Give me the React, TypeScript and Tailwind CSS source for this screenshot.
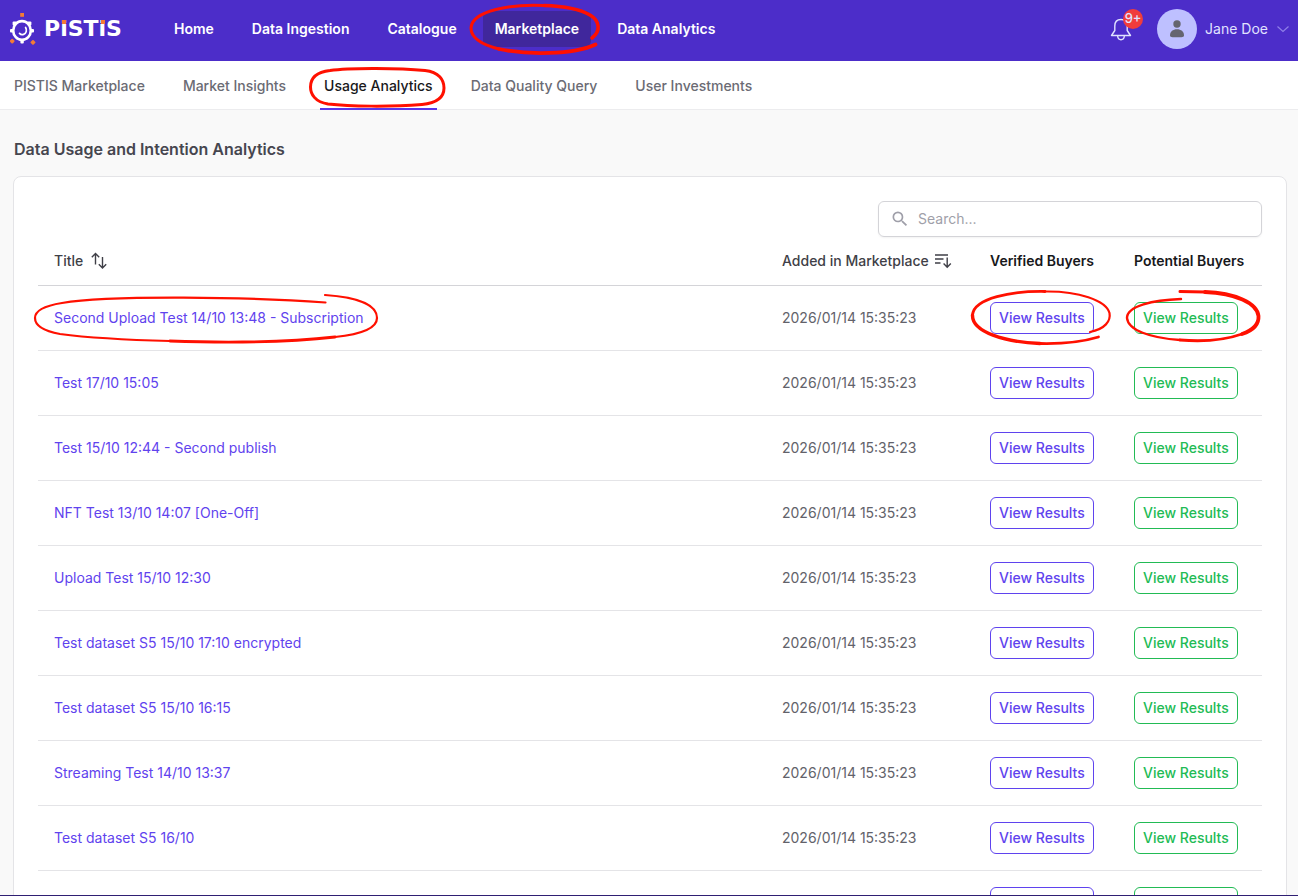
import React from 'react'
import { MdSearch } from 'react-icons/md'

interface Dataset {
  title: string
  added: string
}

const ADDED = '2026/01/14 15:35:23'

const datasets: Dataset[] = [
  { title: 'Second Upload Test 14/10 13:48 - Subscription', added: ADDED },
  { title: 'Test 17/10 15:05', added: ADDED },
  { title: 'Test 15/10 12:44 - Second publish', added: ADDED },
  { title: 'NFT Test 13/10 14:07 [One-Off]', added: ADDED },
  { title: 'Upload Test 15/10 12:30', added: ADDED },
  { title: 'Test dataset S5 15/10 17:10 encrypted', added: ADDED },
  { title: 'Test dataset S5 15/10 16:15', added: ADDED },
  { title: 'Streaming Test 14/10 13:37', added: ADDED },
  { title: 'Test dataset S5 16/10', added: ADDED },
  { title: 'Test dataset S5 15/10', added: ADDED },
]

const mainNav = ['Home', 'Data Ingestion', 'Catalogue', 'Marketplace', 'Data Analytics']

const subNav = [
  'PISTIS Marketplace',
  'Market Insights',
  'Usage Analytics',
  'Data Quality Query',
  'User Investments',
]

// Hand-drawn red marker ring, laid over its relative parent
function Marker({
  className,
  viewBox,
  strokes,
}: {
  className: string
  viewBox: string
  strokes: { d: string; w: number }[]
}) {
  return (
    <svg
      className={`pointer-events-none absolute z-10 max-w-none ${className}`}
      viewBox={viewBox}
      fill="none"
      stroke="#ff1000"
      strokeLinecap="round"
      aria-hidden="true"
    >
      {strokes.map((s) => (
        <path key={s.d} d={s.d} strokeWidth={s.w} />
      ))}
    </svg>
  )
}

function LogoMark() {
  return (
    <svg className="h-8 w-[26px]" viewBox="0 0 26 32" fill="none" aria-hidden="true">
      <ellipse cx="12" cy="17.5" rx="8.8" ry="9.4" stroke="#fff" strokeWidth="2.6" />
      <g fill="#fff">
        <rect x="0" y="16" width="4" height="3.4" rx="1" />
        <rect x="20" y="16" width="4" height="3.4" rx="1" />
        <rect x="10.4" y="26" width="3.4" height="4.4" rx="1" />
        <rect x="2.6" y="8.6" width="4" height="4" rx="1" />
        <rect x="17.4" y="8.6" width="4" height="4" rx="1" />
      </g>
      <path d="M15.6 14.5c1.6 2.6.8 5.9-2 6.9-1.5.5-3.1.1-4.1-1" stroke="#fff" strokeWidth="1.7" strokeLinecap="round" />
      <g fill="#f47b35">
        <rect x="10.2" y="0" width="3.8" height="3.8" />
        <rect x="0.2" y="26.1" width="4" height="4" rx="1" transform="rotate(45 2.2 28.1)" />
        <rect x="21" y="27.4" width="4" height="4" rx="1" transform="rotate(45 23 29.4)" />
      </g>
    </svg>
  )
}

function DottedI() {
  return (
    <span className="relative">
      i
      <span className="absolute top-[4px] left-[2px] h-[4px] w-[4px] bg-[#f47b35]" />
    </span>
  )
}

function SortBoth() {
  return (
    <svg className="h-5 w-5" viewBox="0 0 20 20" fill="none" stroke="currentColor" strokeWidth="1.4" aria-hidden="true">
      <path d="M6.5 13.5V2.5M2.8 6.2 6.5 2.5l3.7 3.7M13.5 6v11M9.8 13.3l3.7 3.7 3.7-3.7" />
    </svg>
  )
}

function SortDesc() {
  return (
    <svg className="h-5 w-5" viewBox="0 0 20 20" fill="none" stroke="currentColor" strokeWidth="1.4" aria-hidden="true">
      <path d="M2 4h13M2 8h8.5M2 12h5.5M14.2 6.5V16M10.6 12.6l3.6 3.6 3.6-3.6" />
    </svg>
  )
}

function BellIcon() {
  return (
    <svg className="h-6 w-6" viewBox="0 0 24 24" fill="none" stroke="currentColor" strokeWidth="1.4" strokeLinejoin="round" aria-hidden="true">
      <path d="M12 2.5c-4 0-6.2 2.8-6.2 6.5v4.5L2.5 18.5h19l-3.3-5V9c0-3.7-2.2-6.5-6.2-6.5ZM8.6 18.8c.2 2.5 1.5 3.9 3.4 3.9s3.2-1.4 3.4-3.9" />
    </svg>
  )
}

function Header() {
  return (
    <header className="flex shrink-0 items-center bg-[#4c2dc9] pt-[9px] pr-2 pb-3 pl-2.5">
      <a href="#" className="flex w-[152px] shrink-0 items-center gap-2">
        <LogoMark />
        <span className="font-['DejaVu_Sans'] text-[22px] leading-6 font-bold text-white">
          P<DottedI />ST<DottedI />S
        </span>
      </a>
      <nav className="flex flex-1 gap-3.5">
        {mainNav.map((item) => (
          <a
            key={item}
            href="#"
            className={`relative rounded-md px-3 py-2 text-sm font-semibold whitespace-nowrap text-white ${
              item === 'Marketplace' ? 'bg-[#40279c]' : ''
            }`}
          >
            {item}
            {item === 'Marketplace' && (
              <Marker
                className="-top-2 -left-4 h-14 w-[136px]"
                viewBox="468 3 136 56"
                strokes={[
                  { d: 'M593 38C602 31 601 21 591 15C579 8 562 6 545 5.5', w: 3.6 },
                  { d: 'M545 5.5C513 4 473 10 472 28C472 38 484 45 500 49', w: 3 },
                  { d: 'M500 49C528 55 574 55 596.5 44.5', w: 3.8 },
                ]}
              />
            )}
          </a>
        ))}
      </nav>
      <div className="flex items-center gap-4">
        <button aria-label="Notifications" className="relative flex h-10 w-10 items-center justify-center text-[#e0e2ff]">
          <BellIcon />
          <span className="absolute top-0 -right-0.5 flex h-5 w-5 items-center justify-center rounded-full bg-[#f03c3c] text-[13px] font-medium">
            9+
          </span>
        </button>
        <button className="flex items-center gap-2 text-sm text-[#e0e2ff]">
          <span className="flex h-10 w-10 items-center justify-center rounded-full bg-[#bec0ff]">
            <svg className="h-5 w-5 text-[#65656f]" viewBox="0 0 20 20" fill="currentColor" aria-hidden="true">
              <circle cx="10" cy="5" r="3.7" />
              <path d="M3 16.5c0-4 3-6.2 7-6.2s7 2.2 7 6.2c0 1.2-1.2 1.7-2.5 1.7h-9C4.2 18.2 3 17.7 3 16.5Z" />
            </svg>
          </span>
          Jane Doe
          <svg className="h-3.5 w-3.5 text-[#8f7fe8]" viewBox="1 1 14 14" fill="none" stroke="currentColor" strokeWidth="1.2" aria-hidden="true">
            <path d="m2.5 5.5 5.5 5 5.5-5" />
          </svg>
        </button>
      </div>
    </header>
  )
}

function SubNav() {
  return (
    <nav className="flex shrink-0 gap-[30px] border-b border-[#ececee] bg-white px-2.5">
      {subNav.map((item) => {
        const active = item === 'Usage Analytics'
        return (
          <a
            key={item}
            href="#"
            className={`relative -mb-px border-b-2 px-1 pt-[15px] pb-3 text-sm font-medium whitespace-nowrap ${
              active ? 'border-[#5a36e8] text-zinc-900' : 'border-transparent text-[#6b6b74]'
            }`}
          >
            {item}
            {active && (
              <Marker
                className="top-1 -left-4 h-11 w-[144px]"
                viewBox="304 65 144 44"
                strokes={[
                  {
                    d: 'M330 70.5C350 67.5 400 68 425 70.5C439 72 444 80 444 88C444 97 437 103 422 104.5C390 107 350 106.5 328 104C315 102 310.5 94 310.5 87C310.5 78 317 72 330 70.5Z',
                    w: 3,
                  },
                ]}
              />
            )}
          </a>
        )
      })}
    </nav>
  )
}

const resultsButton = 'relative h-8 rounded-md border px-2 text-sm font-medium whitespace-nowrap'

function DatasetRow({ dataset, marked }: { dataset: Dataset; marked: boolean }) {
  return (
    <tr className="h-[65px] border-b border-zinc-200">
      <td className="px-4">
        <a href="#" className="relative inline-block text-[#5f43ee]">
          {dataset.title}
          {marked && (
            <Marker
              className="-top-4 -left-6 h-[56px] w-[352px]"
              viewBox="30 292 352 56"
              strokes={[
                {
                  d: 'M325.5 302.5C250 297 110 295 62 303C43 306 35 311 35 318C35 326 44 331 60 334C90 338 130 340 170 341',
                  w: 2.2,
                },
                { d: 'M170 341C230 343 290 342 335 337', w: 2.8 },
                { d: 'M335 337C364 334 377 327 377 318C377 304 355 297 325 295', w: 2.2 },
              ]}
            />
          )}
        </a>
      </td>
      <td className="px-4 text-[#62626a]">{dataset.added}</td>
      <td className="px-4">
        <button className={`${resultsButton} border-[#5f43ee] text-[#5f43ee]`}>
          View Results
          {marked && (
            <Marker
              className="-top-[15px] -left-[23px] h-[60px] w-[148px]"
              viewBox="968 288 148 60"
              strokes={[
                { d: 'M1090 332C1105 329 1111 321 1109.5 313C1106 300 1078 291 1045 291.5', w: 2.2 },
                { d: 'M1045 291.5C1012 291 974 298 972.5 315', w: 2.8 },
                { d: 'M972.5 315C972 332 1005 342 1040 343.5', w: 3.4 },
                { d: 'M1040 343.5C1062 344 1082 342 1098.5 337', w: 2.8 },
              ]}
            />
          )}
        </button>
      </td>
      <td className="px-4">
        <button className={`${resultsButton} border-[#22bb55] text-[#22bb55]`}>
          View Results
          {marked && (
            <Marker
              className="-top-[15px] -left-[15px] h-[60px] w-[144px]"
              viewBox="1120 288 144 60"
              strokes={[
                { d: 'M1181 299C1153 300 1127 306 1127 318C1128 330 1150 338 1180 340', w: 2.4 },
                { d: 'M1180 340C1205 342 1228 339 1242 334', w: 2.8 },
                { d: 'M1242 334C1254 330 1259 324 1258.5 316C1257 303 1235 293 1205 292', w: 3.8 },
                { d: 'M1205 292L1180 291.5', w: 3 },
              ]}
            />
          )}
        </button>
      </td>
    </tr>
  )
}

export default function App() {
  return (
    <div className="flex h-screen flex-col border-b border-[#2f1f73] bg-[#f9f9f9] font-['Inter',sans-serif]">
      <Header />
      <SubNav />
      <main className="min-h-0 flex-1 overflow-x-hidden overflow-y-auto pr-[11px] pl-[13px] [scrollbar-width:none]">
        <h1 className="px-px pt-[27px] pb-[15px] text-base font-semibold text-[#46464f]">
          Data Usage and Intention Analytics
        </h1>
        <section className="rounded-lg border border-zinc-200 bg-white p-6">
          <label className="ml-auto flex h-9 w-96 items-center gap-2 rounded-md border border-zinc-300 px-[11px] shadow-xs">
            <MdSearch className="h-5 w-5 text-zinc-400" aria-hidden="true" />
            <input
              type="text"
              aria-label="Search"
              placeholder="Search..."
              className="min-w-0 flex-1 text-sm text-zinc-900 outline-none placeholder:text-zinc-400"
            />
          </label>
          <table className="w-full table-fixed text-left text-sm">
            <thead>
              <tr className="h-12 border-b border-zinc-300">
                <th className="px-4 font-medium text-zinc-700">
                  <button className="flex items-center gap-1.5">
                    Title
                    <SortBoth />
                  </button>
                </th>
                <th className="w-52 px-4 font-medium text-zinc-700">
                  <button className="flex items-center gap-1 whitespace-nowrap">
                    Added in Marketplace
                    <SortDesc />
                  </button>
                </th>
                <th className="w-36 px-4 font-semibold whitespace-nowrap text-zinc-900">Verified Buyers</th>
                <th className="w-36 px-4 font-semibold whitespace-nowrap text-zinc-900">Potential Buyers</th>
              </tr>
            </thead>
            <tbody>
              {datasets.map((dataset, i) => (
                <DatasetRow key={dataset.title} dataset={dataset} marked={i === 0} />
              ))}
            </tbody>
          </table>
        </section>
      </main>
    </div>
  )
}
